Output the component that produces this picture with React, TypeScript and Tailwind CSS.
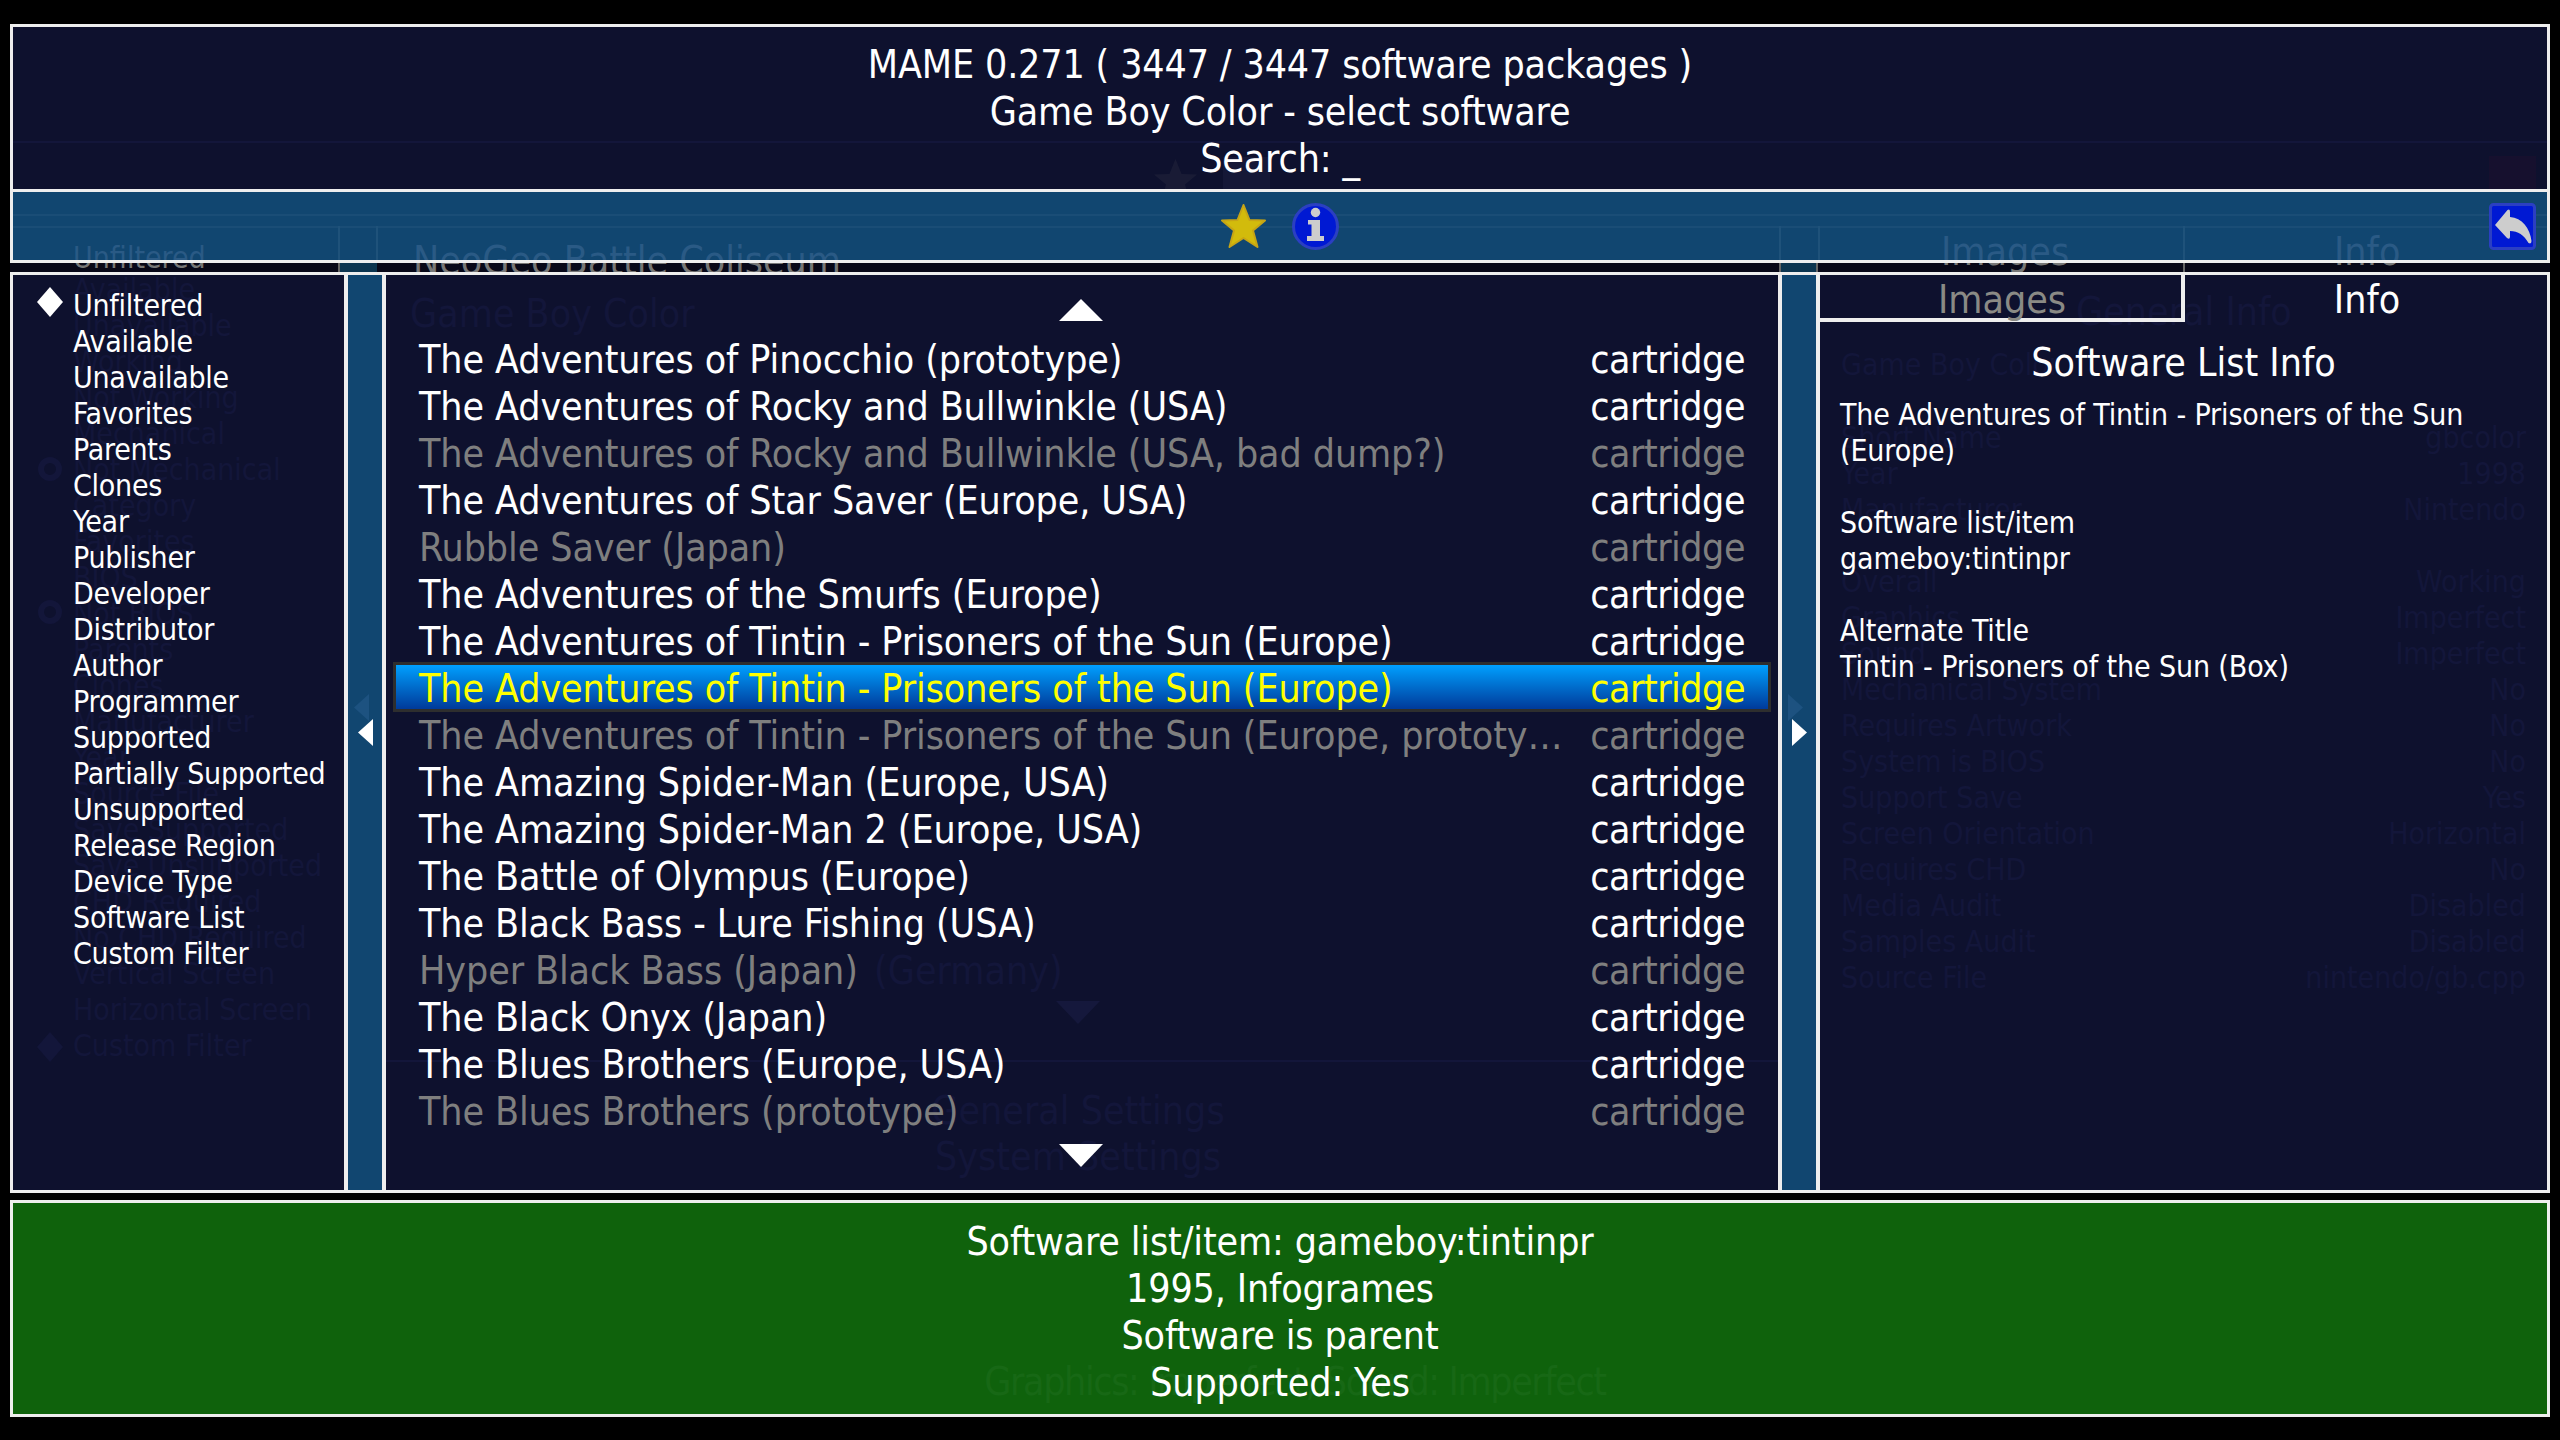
const filters = ['Unfiltered', 'Available', 'Unavailable', 'Favorites', 'Parents', 'Clones', 'Year', 'Publisher', 'Developer', 'Distributor', 'Author', 'Programmer', 'Supported', 'Partially Supported', 'Unsupported', 'Release Region', 'Device Type', 'Software List', 'Custom Filter'];

const ghostFilters = ['Available', 'Unavailable', 'Working', 'Not Working', 'Mechanical', 'Not Mechanical', 'Category', 'Favorites', 'BIOS', 'Not BIOS', 'Parents', 'Clones', 'Manufacturer', 'Year', 'Source File', 'Save Supported', 'Save Unsupported', 'CHD Required', 'No CHD Required', 'Vertical Screen', 'Horizontal Screen', 'Custom Filter'];

const ghostInfo = [
  ['Short Name', 'gbcolor'],
  ['Year', '1998'],
  ['Manufacturer', 'Nintendo'],
  ['', ''],
  ['Overall', 'Working'],
  ['Graphics', 'Imperfect'],
  ['Sound', 'Imperfect'],
  ['Mechanical System', 'No'],
  ['Requires Artwork', 'No'],
  ['System is BIOS', 'No'],
  ['Support Save', 'Yes'],
  ['Screen Orientation', 'Horizontal'],
  ['Requires CHD', 'No'],
  ['Media Audit', 'Disabled'],
  ['Samples Audit', 'Disabled'],
  ['Source File', 'nintendo/gb.cpp'],
];

const rows = [
  { name: 'The Adventures of Pinocchio (prototype)' },
  { name: 'The Adventures of Rocky and Bullwinkle (USA)' },
  { name: 'The Adventures of Rocky and Bullwinkle (USA, bad dump?)', dim: true },
  { name: 'The Adventures of Star Saver (Europe, USA)' },
  { name: 'Rubble Saver (Japan)', dim: true },
  { name: 'The Adventures of the Smurfs (Europe)' },
  { name: 'The Adventures of Tintin - Prisoners of the Sun (Europe)' },
  { name: 'The Adventures of Tintin - Prisoners of the Sun (Europe)', selected: true },
  { name: 'The Adventures of Tintin - Prisoners of the Sun (Europe, prototy…', dim: true },
  { name: 'The Amazing Spider-Man (Europe, USA)' },
  { name: 'The Amazing Spider-Man 2 (Europe, USA)' },
  { name: 'The Battle of Olympus (Europe)' },
  { name: 'The Black Bass - Lure Fishing (USA)' },
  { name: 'Hyper Black Bass (Japan)', dim: true },
  { name: 'The Black Onyx (Japan)' },
  { name: 'The Blues Brothers (Europe, USA)' },
  { name: 'The Blues Brothers (prototype)', dim: true },
];

const starPath = 'M23.5 2 L29.5 17 L45 17.5 L33 27.5 L37.5 44 L23.5 35 L9.5 44 L14 27.5 L2 17.5 L17.5 17 Z';

function Star({ className }: { className: string }) {
  return (
    <svg viewBox="0 0 47 47" className={className}>
      <path d={starPath} fill="#d2bb0c" stroke="#c7a515" strokeWidth="2" strokeLinejoin="round" />
    </svg>
  );
}

function InfoIcon() {
  return (
    <svg viewBox="0 0 47 47" className="w-[47px] h-[47px]">
      <circle cx="23.5" cy="23.5" r="22" fill="#0019d3" stroke="#2b3fc2" strokeWidth="3" />
      <circle cx="23.5" cy="9.5" r="4.7" fill="#cdcdcd" />
      <path d="M16 17 H28 V33 H32 V38 H15 V33 H19.5 V21.5 H16 Z" fill="#cdcdcd" />
    </svg>
  );
}

function BackIcon() {
  return (
    <svg viewBox="0 0 47 47" className="w-[47px] h-[47px]">
      <rect x="1.5" y="1.5" width="44" height="44" rx="3" fill="#0019d3" stroke="#2b3fc2" strokeWidth="3" />
      <path d="M6 22 L18.5 7 Q21 5.5 21 9 V14 C33 15 41 25 42.5 38 Q42.5 41.5 39.5 40 C35 32 29 28 21 28 V33.5 Q21 37 18 35 Z" fill="#cdcdcd" />
    </svg>
  );
}

export default function App() {
  return (
    <div className="h-screen w-full bg-black pt-[24px] pl-[10px] pr-[10px] flex flex-col text-white font-['DejaVu_Sans_Condensed','DejaVu_Sans',sans-serif] overflow-hidden">
      {/* Header */}
      <div className="relative h-[165px] shrink-0 border-[3px] border-b-0 border-[#eeeeee] bg-[#0e112e] overflow-hidden">
        <div className="absolute left-0 right-0 top-[114px] h-[2px] bg-[#13163a]"></div>
        <div className="absolute left-[1139px] top-[130px] flex items-start gap-[24px] opacity-10">
          <svg viewBox="0 0 47 47" className="w-[47px] h-[47px]"><path d={starPath} fill="#777" /></svg>
          <div className="w-[47px] h-[47px] bg-[#555588]"></div>
        </div>
        <div className="absolute right-[11px] top-[129px] w-[47px] h-[47px] bg-[#2a1130] opacity-30"></div>
        <div className="relative flex flex-col items-center pt-[14px] text-[39px] leading-[47px] tracking-[-0.15px]">
          <div>MAME 0.271 ( 3447 / 3447 software packages )</div>
          <div>Game Boy Color - select software</div>
          <div>Search: _</div>
        </div>
      </div>

      {/* Toolbar */}
      <div className="relative h-[74px] shrink-0 border-[3px] border-[#eeeeee] bg-[#114670] overflow-hidden flex items-start justify-center">
        <div className="absolute left-0 right-0 top-[22px] h-[2px] bg-[#1a4d76]"></div>
        <div className="absolute left-0 right-0 top-[34px] h-[2px] bg-[#1a4d76]"></div>
        <div className="absolute left-[325px] top-[34px] bottom-0 w-[2px] bg-[#1f527a]"></div>
        <div className="absolute left-[363px] top-[34px] bottom-0 w-[2px] bg-[#1f527a]"></div>
        <div className="absolute left-[1766px] top-[34px] bottom-0 w-[2px] bg-[#1f527a]"></div>
        <div className="absolute left-[1805px] top-[34px] bottom-0 w-[2px] bg-[#1f527a]"></div>
        <div className="absolute left-[2170px] top-[34px] bottom-0 w-[2px] bg-[#1f527a]"></div>
        <div className="absolute left-[60px] top-[48px] text-[30px] leading-[36px] text-[#2a5a85]">Unfiltered</div>
        <div className="absolute left-[400px] top-[45px] text-[39px] leading-[47px] text-[#2a5a85] whitespace-nowrap">NeoGeo Battle Coliseum</div>
        <div className="absolute left-[1928px] top-[36px] text-[39px] leading-[47px] text-[#2a5a85]">Images</div>
        <div className="absolute left-[2321px] top-[36px] text-[39px] leading-[47px] text-[#2a5a85]">Info</div>
        <div className="relative mt-[11px] ml-[-1px] flex gap-[25px]">
          <Star className="w-[47px] h-[47px]" />
          <InfoIcon />
        </div>
        <div className="absolute right-[11px] top-[11px]">
          <BackIcon />
        </div>
      </div>

      {/* Gap strip */}
      <div className="relative h-[9px] shrink-0 bg-[#080818] overflow-hidden">
        <div className="absolute left-[328px] top-0 bottom-0 w-[39px] bg-[#0c3550] border-l-[2px] border-[#666666]"></div>
        <div className="absolute left-[1769px] top-0 bottom-0 w-[39px] bg-[#0c3550] border-x-[2px] border-[#666666]"></div>
        <div className="absolute left-[2173px] top-0 bottom-0 w-[2px] bg-[#666666]"></div>
        <div className="absolute left-[63px] top-[-23px] text-[30px] leading-[36px] text-[#777777]">Unfiltered</div>
        <div className="absolute left-[403px] top-[-26px] text-[39px] leading-[47px] text-[#777777] whitespace-nowrap">NeoGeo Battle Coliseum</div>
        <div className="absolute left-[1931px] top-[-35px] text-[39px] leading-[47px] text-[#777777]">Images</div>
        <div className="absolute left-[2324px] top-[-35px] text-[39px] leading-[47px] text-[#777777]">Info</div>
      </div>

      {/* Main */}
      <div className="h-[921px] shrink-0 flex border-[3px] border-[#eeeeee] bg-[#0e112e] overflow-hidden">
        {/* Filters */}
        <div className="relative w-[331px] shrink-0 overflow-hidden">
          <div className="absolute left-[60px] top-[-3px] flex flex-col text-[30px] leading-[36px] text-[#13163a] whitespace-nowrap">
            {ghostFilters.map((f, i) => (
              <div key={i}>{f}</div>
            ))}
          </div>
          <svg viewBox="0 0 26 30" className="absolute left-[24px] top-[757px] w-[26px] h-[30px]">
            <path d="M13 0 L26 15 L13 30 L0 15 Z" fill="#13163a" />
          </svg>
          <svg viewBox="0 0 26 26" className="absolute left-[24px] top-[181px] w-[26px] h-[26px]">
            <circle cx="13" cy="13" r="9" fill="none" stroke="#13163a" strokeWidth="6" />
          </svg>
          <svg viewBox="0 0 26 26" className="absolute left-[24px] top-[324px] w-[26px] h-[26px]">
            <circle cx="13" cy="13" r="9" fill="none" stroke="#13163a" strokeWidth="6" />
          </svg>
          <div className="relative flex flex-col pt-[13px] pl-[60px] text-[30px] leading-[36px] tracking-[-0.25px]">
            {filters.map((f, i) => (
              <div key={f} className="relative">
                {i === 0 && (
                  <svg viewBox="0 0 26 30" className="absolute left-[-36px] top-[-1px] w-[26px] h-[30px]">
                    <path d="M13 0 L26 15 L13 30 L0 15 Z" fill="#ffffff" />
                  </svg>
                )}
                {f}
              </div>
            ))}
          </div>
        </div>

        {/* Left splitter */}
        <div className="relative w-[42px] shrink-0 border-x-[4px] border-[#eeeeee] bg-[#114670] flex items-center justify-center">
          <svg viewBox="0 0 15 27" className="absolute left-[6px] top-[419px] w-[15px] h-[27px]">
            <path d="M15 0 V27 L0 13.5 Z" fill="#1d5280" />
          </svg>
          <svg viewBox="0 0 15 27" className="relative w-[15px] h-[27px]">
            <path d="M15 0 V27 L0 13.5 Z" fill="#ffffff" />
          </svg>
        </div>

        {/* Software list */}
        <div className="relative flex-1 flex flex-col items-stretch px-[9px] min-w-0">
          <div className="absolute left-[24px] top-[15px] text-[39px] leading-[47px] text-[#13163a]">Game Boy Color</div>
          <div className="absolute left-[488px] top-[672px] text-[39px] leading-[47px] text-[#13163a]">(Germany)</div>
          <svg viewBox="0 0 44 23" className="absolute left-[670px] top-[726px] w-[44px] h-[23px]">
            <path d="M0 0 H44 L22 23 Z" fill="#15183c" />
          </svg>
          <div className="absolute left-0 right-0 top-[785px] h-[2px] bg-[#13163a]"></div>
          <div className="absolute left-[532px] top-[812px] w-[320px] text-center text-[39px] leading-[47px] text-[#13163a]">General Settings</div>
          <div className="absolute left-[532px] top-[858px] w-[320px] text-center text-[39px] leading-[47px] text-[#13163a]">System Settings</div>
          <div className="relative flex justify-center h-[61px] pt-[24px] shrink-0">
            <svg viewBox="0 0 44 22" className="w-[44px] h-[22px] ml-[-2px]">
              <path d="M22 0 L44 22 H0 Z" fill="#ffffff" />
            </svg>
          </div>
          <div className="relative flex flex-col">
            {rows.map((r, i) => (
              <div
                key={i}
                className={
                  r.selected
                    ? 'flex justify-between items-center h-[44px] pl-[23px] pr-[23px] text-[39px] leading-[47px] text-[#ffff00] bg-gradient-to-b from-[#00a0ff] to-[#003a9a] border-[3px] border-[#2e2e2e] -mx-[2px] -mt-[3px] relative z-10 box-content'
                    : r.dim
                      ? 'flex justify-between items-center h-[47px] pl-[24px] pr-[24px] text-[39px] leading-[47px] text-[#7f7f7f]'
                      : 'flex justify-between items-center h-[47px] pl-[24px] pr-[24px] text-[39px] leading-[47px] text-white'
                }
              >
                <span className={r.selected ? 'whitespace-nowrap tracking-[-0.1px] mt-[2px]' : 'whitespace-nowrap tracking-[-0.1px]'}>{r.name}</span>
                <span className={r.selected ? 'tracking-[-0.5px] mt-[2px]' : 'tracking-[-0.5px]'}>cartridge</span>
              </div>
            ))}
          </div>
          <div className="relative flex justify-center pt-[9px]">
            <svg viewBox="0 0 44 23" className="w-[44px] h-[23px] ml-[-2px]">
              <path d="M0 0 H44 L22 23 Z" fill="#ffffff" />
            </svg>
          </div>
        </div>

        {/* Right splitter */}
        <div className="relative w-[42px] shrink-0 border-x-[4px] border-[#eeeeee] bg-[#114670] flex items-center justify-center">
          <svg viewBox="0 0 15 27" className="absolute left-[6px] top-[419px] w-[15px] h-[27px]">
            <path d="M0 0 V27 L15 13.5 Z" fill="#1d5280" />
          </svg>
          <svg viewBox="0 0 15 27" className="relative w-[15px] h-[27px]">
            <path d="M0 0 V27 L15 13.5 Z" fill="#ffffff" />
          </svg>
        </div>

        {/* Info panel */}
        <div className="relative w-[727px] shrink-0 overflow-hidden">
          <div className="absolute left-[256px] top-[13px] text-[39px] leading-[47px] text-[#13163a]">General Info</div>
          <div className="absolute left-[21px] top-[72px] text-[30px] leading-[36px] text-[#13163a]">Game Boy Color</div>
          <div className="absolute left-[21px] right-[21px] top-[145px] flex flex-col text-[30px] leading-[36px] text-[#13163a]">
            {ghostInfo.map((g, i) => (
              <div key={i} className="flex justify-between h-[36px]">
                <span>{g[0]}</span>
                <span>{g[1]}</span>
              </div>
            ))}
          </div>
          <div className="relative flex h-[47px]">
            <div className="w-[365px] border-r-[4px] border-b-[4px] border-[#eeeeee] text-center text-[39px] leading-[49px] pl-[3px] text-[#8a8a85]">Images</div>
            <div className="flex-1 text-center text-[39px] leading-[50px] pl-[2px]">Info</div>
          </div>
          <div className="relative text-center text-[39px] leading-[47px] mt-[17px]">Software List Info</div>
          <div className="relative pl-[20px] pr-[20px] pt-[11px] text-[30px] leading-[36px] tracking-[-0.12px]">
            <div>The Adventures of Tintin - Prisoners of the Sun</div>
            <div>(Europe)</div>
            <div className="mt-[36px]">Software list/item</div>
            <div>gameboy:tintinpr</div>
            <div className="mt-[36px]">Alternate Title</div>
            <div>Tintin - Prisoners of the Sun (Box)</div>
          </div>
        </div>
      </div>

      {/* Black gap */}
      <div className="h-[7px] shrink-0"></div>

      {/* Status panel */}
      <div className="relative h-[217px] shrink-0 border-[3px] border-[#eeeeee] bg-[#0f620c] overflow-hidden">
        <div className="absolute left-[30px] right-0 top-[155px] text-center text-[39px] leading-[47px] tracking-[-1.4px] text-[#176815]">Graphics: Imperfect, Sound: Imperfect</div>
        <div className="relative flex flex-col items-center pt-[15px] text-[39px] leading-[47px] tracking-[-0.15px]">
          <div>Software list/item: gameboy:tintinpr</div>
          <div>1995, Infogrames</div>
          <div>Software is parent</div>
          <div>Supported: Yes</div>
        </div>
      </div>
    </div>
  );
}
